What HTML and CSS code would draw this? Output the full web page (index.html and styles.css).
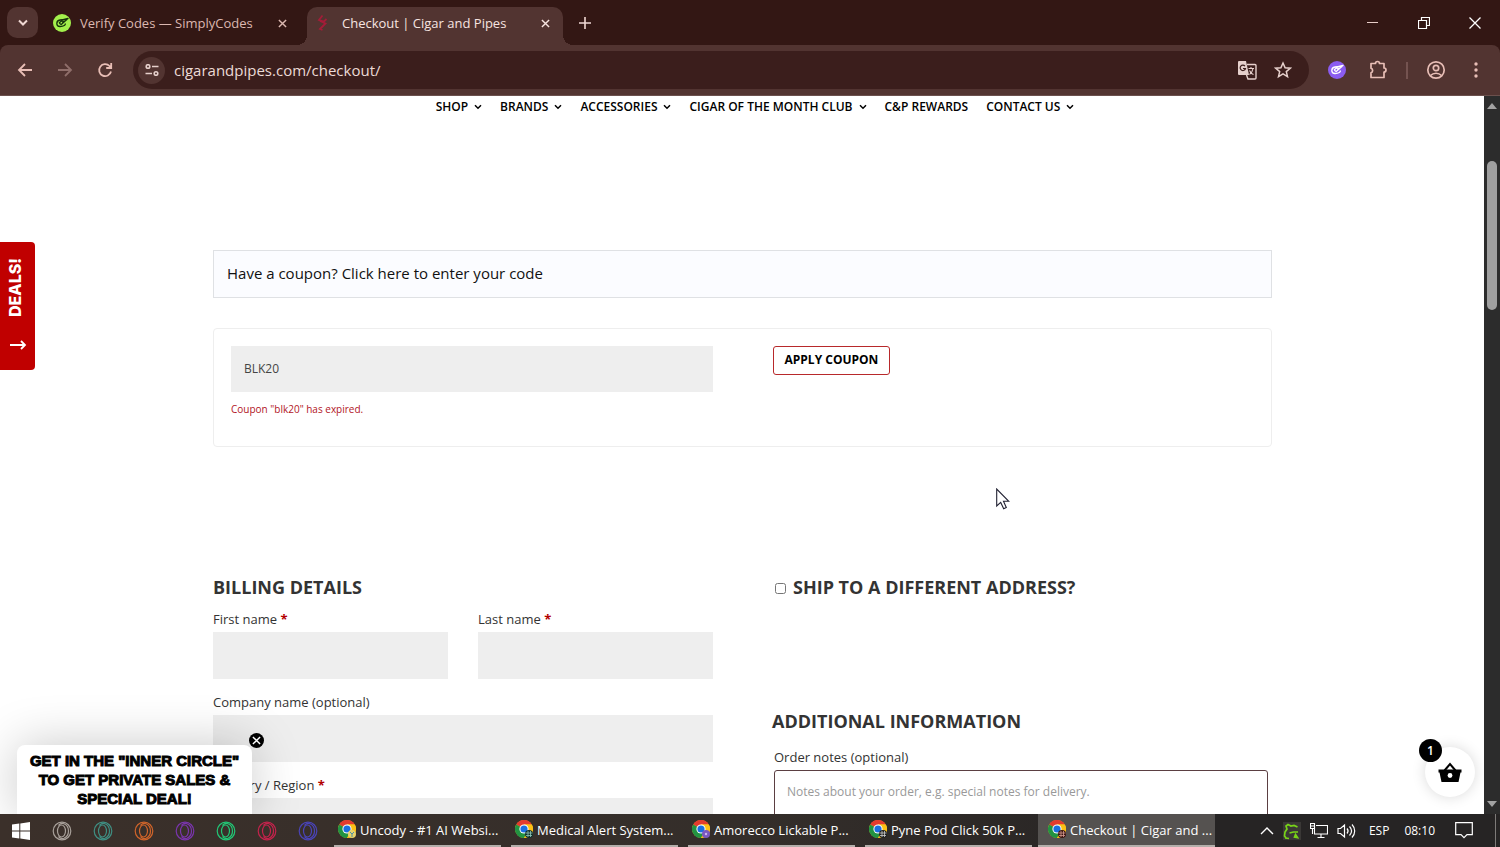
FILE: index.html
```html
<!DOCTYPE html>
<html lang="en">
<head>
    <meta charset="UTF-8">
    <title>Checkout | Cigar and Pipes</title>
    <link rel="stylesheet" href="styles.css">
</head>
<body>
    <!-- shared icons -->
    <svg class="sprite" width="0" height="0">
        <symbol id="caret" viewBox="0 0 8 6"><path d="M1 1.2l3 3 3-3" fill="none" stroke="currentColor" stroke-width="1.5"/></symbol>
        <symbol id="cross" viewBox="0 0 10 10"><path d="M1 1l8 8M9 1l-8 8" fill="none" stroke="currentColor" stroke-width="1.6"/></symbol>
        <symbol id="opera" viewBox="0 0 20 20">
            <g fill="none" stroke="currentColor" stroke-width="1.2">
                <circle cx="10" cy="10" r="8.8"/>
                <ellipse cx="9.5" cy="10" rx="4" ry="6"/>
                <path d="M6.500 4.500C8 2.700 10 2 12 2.800c6 2.600 6 11.800 0 14.400-2 .8-4 .1-5.500-1.700"/>
            </g>
        </symbol>
        <symbol id="chrome" viewBox="0 0 20 20">
            <circle cx="9" cy="9" r="9" fill="#fbc116"/>
            <path d="M9 9L1.200 4.500A9 9 0 0 1 16.800 4.500L9 4.500z" fill="#e33b2e"/>
            <path d="M9 9L1.200 4.500A9 9 0 0 0 9 18l4-6.800z" fill="#229342"/>
            <path d="M9 4.500h7.800A9 9 0 0 1 9 18l4-6.700z" fill="#fbc116"/>
            <circle cx="9" cy="9" r="4.600" fill="#fff"/>
            <circle cx="9" cy="9" r="3.600" fill="#1a6fe0"/>
        </symbol>
        <symbol id="codes" viewBox="0 0 18 18">
            <path d="M11.500 5.500L7 6C5 6.300 3.800 7.500 3.800 9.500c0 1.700 1.200 3 3.200 3l2.500-.3c1.700-.3 2.800-1.300 3-2.700M6 9l2.200 1.500L15 4.500l-5 1.200L6 9M9 8l2.500-1" fill="none" stroke="currentColor" stroke-width="1.3" stroke-linejoin="round"/>
        </symbol>
    </svg>

    <header class="titlebar">
        <button class="tab-search" aria-label="Search tabs">
            <svg width="10" height="8" viewBox="0 0 10 8"><path d="M1 1.500l4 4 4-4" fill="none" stroke="currentColor" stroke-width="2"/></svg>
        </button>
        <div class="tab">
            <svg class="favicon green" width="18" height="18"><use href="#codes"/></svg>
            <span class="tab-title">Verify Codes — SimplyCodes</span>
            <button class="tab-close" aria-label="Close tab"><svg width="9" height="9"><use href="#cross"/></svg></button>
        </div>
        <div class="tab active">
            <svg width="18" height="18" viewBox="0 0 18 18"><path d="M7.500 1.500L4 6l5 1.500 2.500-2.500M5 7l5.500 2.500L5 15l2.500 1" fill="none" stroke="#a31c38" stroke-width="1.8"/></svg>
            <span class="tab-title">Checkout | Cigar and Pipes</span>
            <button class="tab-close" aria-label="Close tab"><svg width="9" height="9"><use href="#cross"/></svg></button>
        </div>
        <button class="new-tab" aria-label="New tab">
            <svg width="12" height="12" viewBox="0 0 12 12"><path d="M6 0v12M0 6h12" stroke="currentColor" stroke-width="1.6"/></svg>
        </button>
        <div class="window-buttons">
            <button aria-label="Minimize"><svg width="12" height="12" viewBox="0 0 12 12"><path d="M0 5.500h11" stroke="#e8cdc8"/></svg></button>
            <button aria-label="Restore"><svg width="12" height="12" viewBox="0 0 12 12"><path d="M.500 3.500h8v8h-8zM3.500 3V.500h8v8H9" fill="none" stroke="currentColor" stroke-width="1.200"/></svg></button>
            <button aria-label="Close"><svg width="12" height="12" viewBox="0 0 12 12"><path d="M.500.500l11 11M11.500.500l-11 11" stroke="currentColor" stroke-width="1.300"/></svg></button>
        </div>
    </header>

    <div class="toolbar">
        <div class="history">
            <button aria-label="Back"><svg width="16" height="16" viewBox="0 0 16 16"><path d="M15 8H2M8 2L2 8l6 6" fill="none" stroke="currentColor" stroke-width="1.800"/></svg></button>
            <button class="dim" aria-label="Forward"><svg width="16" height="16" viewBox="0 0 16 16"><path d="M1 8h13M8 2l6 6-6 6" fill="none" stroke="currentColor" stroke-width="1.800"/></svg></button>
            <button aria-label="Reload"><svg width="16" height="16" viewBox="0 0 16 16"><path d="M14 9.500A6 6 0 1 1 12.500 4L14 5.500M14.200 1v5H9.200" fill="none" stroke="currentColor" stroke-width="1.800"/></svg></button>
        </div>
        <div class="omnibox">
            <button class="site-info" aria-label="Site information">
                <svg width="14" height="12" viewBox="0 0 14 12"><g fill="none" stroke="currentColor" stroke-width="1.600"><circle cx="3" cy="2.500" r="1.800"/><path d="M7 2.500h6.500M.500 9.500H7"/><circle cx="11" cy="9.500" r="1.800"/></g></svg>
            </button>
            <input class="url" type="text" value="cigarandpipes.com/checkout/" aria-label="Address">
            <button aria-label="Translate">
                <svg width="20" height="20" viewBox="0 0 20 20"><path d="M2 1h7l3 14H2a1 1 0 0 1-1-1V2a1 1 0 0 1 1-1z" fill="currentColor"/><path d="M10 4.500h8a1 1 0 0 1 1 1V18a1 1 0 0 1-1 1h-7l-1.500-4" fill="none" stroke="currentColor" stroke-width="1.400"/><path d="M8 6.200A2.700 2.700 0 1 0 8.500 8.500H6" fill="none" stroke="#3b1e1c" stroke-width="1.200"/><path d="M11.500 8.500H17M14 7v1.500M16 8.500c-.5 3-2 5-3.500 6M12.500 10.500c1 2 2.500 3.500 4 4" fill="none" stroke="currentColor" stroke-width="1.100"/></svg>
            </button>
            <button aria-label="Bookmark">
                <svg width="18" height="18" viewBox="0 0 18 18"><path d="M9 2l2.100 4.700 5.100.5-3.900 3.400 1.200 5L9 12.900l-4.500 2.700 1.200-5L1.800 7.200l5.100-.5z" fill="none" stroke="currentColor" stroke-width="1.500"/></svg>
            </button>
        </div>
        <div class="extensions">
            <button aria-label="SimplyCodes"><svg class="favicon purple" width="18" height="18"><use href="#codes"/></svg></button>
            <button aria-label="Extensions">
                <svg width="20" height="20" viewBox="0 0 20 20"><path d="M3 3.500h4.500a2 2 0 0 1 4 0H16V8a2 2 0 0 1 0 4v5.500H3v-4.800a2.300 2.300 0 0 0 0-4.400z" fill="none" stroke="currentColor" stroke-width="1.700" stroke-linejoin="round"/></svg>
            </button>
            <span class="divider"></span>
            <button aria-label="Profile">
                <svg width="20" height="20" viewBox="0 0 20 20"><g fill="none" stroke="currentColor" stroke-width="1.700"><circle cx="10" cy="10" r="8.200"/><circle cx="10" cy="8" r="2.700"/><path d="M4.500 15.500c3-3 8-3 11 0"/></g></svg>
            </button>
            <button aria-label="Menu">
                <svg width="4" height="16" viewBox="0 0 4 16"><g fill="currentColor"><circle cx="2" cy="2" r="1.700"/><circle cx="2" cy="8" r="1.700"/><circle cx="2" cy="14" r="1.700"/></g></svg>
            </button>
        </div>
    </div>

    <div class="window">
        <main class="page">
            <nav class="menu">
                <a href="#">SHOP <svg width="8" height="6"><use href="#caret"/></svg></a>
                <a href="#">BRANDS <svg width="8" height="6"><use href="#caret"/></svg></a>
                <a href="#">ACCESSORIES <svg width="8" height="6"><use href="#caret"/></svg></a>
                <a href="#">CIGAR OF THE MONTH CLUB <svg width="8" height="6"><use href="#caret"/></svg></a>
                <a href="#">C&amp;P REWARDS</a>
                <a href="#">CONTACT US <svg width="8" height="6"><use href="#caret"/></svg></a>
            </nav>

            <div class="content">
                <div class="notice">Have a coupon? <a href="#coupon">Click here to enter your code</a></div>

                <form class="coupon">
                    <div>
                        <input class="field" type="text" id="coupon" value="BLK20" aria-label="Coupon code">
                        <p class="error">Coupon "blk20" has expired.</p>
                    </div>
                    <div>
                        <button class="apply" type="button">APPLY COUPON</button>
                    </div>
                </form>

                <form class="checkout">
                    <div class="billing">
                        <h3>BILLING DETAILS</h3>
                        <div class="names">
                            <div class="row">
                                <label for="first">First name <b class="required">*</b></label>
                                <input class="field" type="text" id="first">
                            </div>
                            <div class="row">
                                <label for="last">Last name <b class="required">*</b></label>
                                <input class="field" type="text" id="last">
                            </div>
                        </div>
                        <div class="row">
                            <label for="company">Company name (optional)</label>
                            <input class="field" type="text" id="company">
                        </div>
                        <div class="row">
                            <label for="country">Country / Region <b class="required">*</b></label>
                            <select class="field" id="country"><option></option></select>
                        </div>
                    </div>
                    <div class="shipping">
                        <h3 class="ship"><input type="checkbox" id="ship"><label for="ship">SHIP TO A DIFFERENT ADDRESS?</label></h3>
                        <h3>ADDITIONAL INFORMATION</h3>
                        <div class="row notes">
                            <label for="notes">Order notes (optional)</label>
                            <textarea id="notes" placeholder="Notes about your order, e.g. special notes for delivery."></textarea>
                        </div>
                    </div>
                </form>
            </div>

            <button class="deals">
                <svg width="18" height="18" viewBox="0 0 18 18"><path d="M1 9h15M12 5l4 4-4 4" fill="none" stroke="currentColor" stroke-width="1.800"/></svg>
                <span>DEALS!</span>
            </button>

            <div class="promo">GET IN THE "INNER CIRCLE" TO GET PRIVATE SALES &amp; SPECIAL DEAL!</div>
            <button class="promo-close" aria-label="Close"><svg width="9" height="9"><use href="#cross"/></svg></button>

            <button class="cart" aria-label="Cart">
                <svg width="24" height="21" viewBox="0 0 24 21"><path d="M6.500 8.500L12 2l5.500 6.500" fill="none" stroke="#000" stroke-width="2"/><path d="M.500 7.500h23v3h-1L20.500 20h-17L1.500 10.500h-1z"/><circle cx="12" cy="13.500" r="2.400" fill="#fff"/></svg>
                <span class="count">1</span>
            </button>

            <svg class="pointer" width="14" height="22" viewBox="0 0 14 22"><path d="M.700 1v17l4-3.600 3 6.300 2.600-1.200-2.800-6.200h5.300z" fill="#fff" stroke="#223" stroke-width="1.100"/></svg>
        </main>
        <div class="scrollbar">
            <svg width="10" height="6" viewBox="0 0 10 6"><path d="M0 6l5-6 5 6z" fill="#a2a2a2"/></svg>
            <span class="thumb"></span>
            <svg width="10" height="6" viewBox="0 0 10 6"><path d="M0 0l5 6 5-6z" fill="#a2a2a2"/></svg>
        </div>
    </div>

    <footer class="taskbar">
        <button class="launch" aria-label="Start"><svg width="18" height="18" viewBox="0 0 18 18"><path d="M0 2.500L7.300 1.500v7H0zM8.300 1.400L18 0v8.500H8.300zM0 9.500h7.300v7L0 15.500zM8.300 9.500H18V18l-9.700-1.400z" fill="#fff"/></svg></button>
        <button class="launch gray" aria-label="Opera 1"><svg width="20" height="20"><use href="#opera"/></svg></button>
        <button class="launch teal" aria-label="Opera 2"><svg width="20" height="20"><use href="#opera"/></svg></button>
        <button class="launch orange" aria-label="Opera 3"><svg width="20" height="20"><use href="#opera"/></svg></button>
        <button class="launch violet" aria-label="Opera 4"><svg width="20" height="20"><use href="#opera"/></svg></button>
        <button class="launch lime" aria-label="Opera 5"><svg width="20" height="20"><use href="#opera"/></svg></button>
        <button class="launch red" aria-label="Opera 6"><svg width="20" height="20"><use href="#opera"/></svg></button>
        <button class="launch blue" aria-label="Opera 7"><svg width="20" height="20"><use href="#opera"/></svg></button>
        <div class="tasks">
            <button class="task"><svg width="20" height="20"><use href="#chrome"/><circle cx="14" cy="14" r="4" fill="#e9d36a"/><path d="M12 12l2 2 2-2M14 14v3" stroke="#4a8fa8" fill="none"/></svg>Uncody - #1 AI Websi...</button>
            <button class="task"><svg width="20" height="20"><use href="#chrome"/><circle cx="14" cy="14" r="4" fill="#12302c"/><path d="M10.500 13h7M11 15.500h6M13 11v6M15.500 11v6" stroke="#8fc7b8" stroke-width=".8"/></svg>Medical Alert System...</button>
            <button class="task"><svg width="20" height="20"><use href="#chrome"/><circle cx="14" cy="14" r="4" fill="#7a58c0"/><circle cx="14" cy="14" r="1.200" fill="#c9b4f0"/></svg>Amorecco Lickable P...</button>
            <button class="task"><svg width="20" height="20"><use href="#chrome"/><circle cx="14" cy="14" r="4" fill="#222"/><path d="M10.500 13h7M11 15.500h6M13 11v6M15.500 11v6" stroke="#ccc" stroke-width=".8"/></svg>Pyne Pod Click 50k P...</button>
            <button class="task current"><svg width="20" height="20"><use href="#chrome"/><circle cx="14" cy="14" r="4" fill="#3a1512"/><path d="M10.500 13h7M11 15.500h6M13 11v6M15.500 11v6" stroke="#d69a90" stroke-width=".8"/></svg>Checkout | Cigar and ...</button>
        </div>
        <div class="tray">
            <svg width="14" height="8" viewBox="0 0 14 8"><path d="M1 7l6-6 6 6" fill="none" stroke="#fff" stroke-width="1.400"/></svg>
            <svg width="18" height="18" viewBox="0 0 18 18"><path fill="#3a3836" d="M0 0h18v18H0z"/><path d="M3.500 16.500L1.500 14l.5-4 2-3-1-3 2-1.500 3 1.500 3-.5 3.500 1.500M2 16l4 .5M6.500 11l4-1h4.500M12.500 12.500l2 3-3-.5z" fill="none" stroke="#78d418" stroke-width="1.700"/></svg>
            <svg width="18" height="16" viewBox="0 0 18 16"><path d="M6 2.500h11.500v8.500H4.500V6M11 11v3.500M7.500 14.500h7M.500.500h4v5h-4zM1 3h3M2.500 5.500V11" fill="none" stroke="#fff" stroke-width="1.100"/></svg>
            <svg width="19" height="16" viewBox="0 0 19 16"><path d="M1 5.500h2.500L7.500 2v12L3.500 10.500H1zM10 5.500c1.300 1.500 1.300 3.500 0 5M12.500 3.500c2.500 2.700 2.500 6.300 0 9M15 1.500c3.600 3.800 3.600 9.200 0 13" fill="none" stroke="#fff" stroke-width="1.200"/></svg>
            <span class="lang">ESP</span>
            <span class="clock">08:10</span>
            <svg width="18" height="17" viewBox="0 0 18 17"><path d="M.700.700h16.600v12H12l-3 3-3-3H.700z" fill="none" stroke="#fff" stroke-width="1.200"/></svg>
            <span class="peek"></span>
        </div>
    </footer>
</body>
</html>
```

FILE: styles.css
```css
* {
    box-sizing: border-box;
}
body {
    margin: 0;
    height: 100vh;
    display: flex;
    flex-direction: column;
    overflow: hidden;
    background-color: #331714;
    color: #333;
    font-family: "Open Sans", "Noto Sans", sans-serif;
    font-size: 13px;
}
button {
    display: flex;
    align-items: center;
    justify-content: center;
    padding: 0;
    border: none;
    background: none;
    color: inherit;
    font-family: inherit;
    cursor: pointer;
}
svg {
    display: block;
    flex-shrink: 0;
}
a {
    color: inherit;
    text-decoration: none;
}
.sprite {
    position: absolute;
}

/* browser tabs */
.titlebar {
    height: 45px;
    flex-shrink: 0;
    display: flex;
    align-items: center;
    padding-left: 7px;
    color: #f0d8d3;
}
.tab-search {
    width: 31px;
    height: 31px;
    border-radius: 10px;
    background-color: #523431;
    margin-right: 13px;
}
.tab {
    align-self: flex-end;
    position: relative;
    width: 256px;
    height: 38px;
    display: flex;
    align-items: center;
    gap: 9px;
    padding: 0 20px 6px 2px;
    font-size: 13px;
    color: #dcb8b1;
}
.tab.active {
    background-color: #523431;
    border-radius: 10px 10px 0 0;
    color: #f7e4e0;
    padding-left: 8px;
    padding-right: 13px;
}
.tab.active::before, .tab.active::after {
    content: "";
    position: absolute;
    bottom: 0;
    width: 10px;
    height: 10px;
}
.tab.active::before {
    left: -10px;
    background: radial-gradient(circle at 0 0, transparent 10px, #523431 10px);
}
.tab.active::after {
    right: -10px;
    background: radial-gradient(circle at 100% 0, transparent 10px, #523431 10px);
}
.tab-title {
    flex: 1;
    white-space: nowrap;
}
.favicon {
    border-radius: 50%;
}
.green {
    background-color: #a3f04c;
    color: #16330c;
}
.purple {
    background-color: #8b5cf0;
    color: #fff;
}
.new-tab {
    width: 30px;
    height: 30px;
    margin-left: 7px;
}
.window-buttons {
    display: flex;
    margin-left: auto;
    color: #fff;
}
.window-buttons button {
    width: 51px;
    height: 44px;
}

/* address bar */
.toolbar {
    height: 51px;
    flex-shrink: 0;
    display: flex;
    align-items: center;
    padding-left: 5px;
    background-color: #523431;
    border-radius: 8px 8px 0 0;
    border-bottom: 1px solid #6b504d;
    color: #e8beb6;
}
.history {
    display: flex;
}
.history button {
    width: 40px;
    height: 38px;
}
.history .dim {
    color: #8f6e6a;
}
.omnibox {
    flex: 1;
    height: 38px;
    display: flex;
    align-items: center;
    gap: 17px;
    margin-left: 8px;
    padding: 0 17px 0 5px;
    border-radius: 19px;
    background-color: #3b1e1c;
    color: #e6d0cc;
}
.site-info {
    width: 27px;
    height: 27px;
    border-radius: 50%;
    background-color: #523431;
}
.url {
    flex: 1;
    margin-left: -8px;
    padding: 0;
    border: none;
    outline: none;
    background: none;
    color: #ecdad6;
    font-family: inherit;
    font-size: 15px;
}
.extensions {
    display: flex;
    align-items: center;
    padding: 0 22px 0 19px;
}
.extensions button:nth-child(2) {
    margin: 0 18px 0 22px;
}
.divider {
    width: 2px;
    height: 17px;
    background-color: #745350;
    margin-right: 18px;
}
.extensions button:last-child {
    margin-left: 28px;
}

/* web page */
.window {
    flex: 1;
    min-height: 0;
    display: flex;
}
.page {
    position: relative;
    flex: 1;
    overflow: hidden;
    background-color: #fff;
}
.menu {
    display: flex;
    justify-content: center;
    gap: 18px;
    padding: 3px 0 0 26px;
    color: #000;
    font-size: 12px;
    font-weight: 600;
    line-height: 16px;
}
.menu a {
    display: flex;
    align-items: center;
    gap: 6px;
}
.content {
    padding: 135px 212px 0 213px;
}
.notice {
    padding: 0 13px 2px;
    border: 1px solid #dfe1e4;
    background-color: #fbfcff;
    color: #111;
    font-size: 15px;
    line-height: 44px;
}
.coupon {
    display: grid;
    grid-template-columns: 1fr 1fr;
    gap: 60px;
    margin-top: 30px;
    padding: 17px;
    border: 1px solid #eee;
    border-radius: 4px;
}
.field {
    display: block;
    width: 100%;
    height: 47px;
    padding: 0 13px;
    border: none;
    border-radius: 0;
    background-color: #eee;
    color: #444;
    font-family: inherit;
    font-size: 12px;
    appearance: none;
}
.coupon .field {
    height: 46px;
    padding-bottom: 2px;
}
.error {
    margin: 10px 0 13px;
    color: #b2141e;
    font-size: 10px;
    line-height: 14px;
}
.apply {
    height: 29px;
    padding: 0 11px 2px;
    border: 1px solid #b8292b;
    border-radius: 3px;
    color: #000;
    font-size: 12px;
    font-weight: 700;
}
.checkout {
    display: grid;
    grid-template-columns: 1fr 1fr;
    gap: 59px;
    margin-top: 130px;
}
h3 {
    margin: 0 0 9px;
    font-size: 18px;
    font-weight: 700;
    line-height: 20px;
}
.names {
    display: grid;
    grid-template-columns: 1fr 1fr;
    gap: 30px;
}
.row {
    margin-bottom: 10px;
}
.row label {
    display: block;
    font-size: 13px;
    line-height: 26px;
}
.required {
    color: #b20000;
}
.ship {
    display: flex;
    align-items: center;
    gap: 7px;
    margin-bottom: 114px;
}
.ship input {
    width: 11px;
    height: 11px;
    margin: 2px 0 0 3px;
}
.notes {
    padding: 4px 4px 0 2px;
}
.notes textarea {
    display: block;
    width: 100%;
    height: 90px;
    padding: 12px;
    border: 1px solid #5b3f42;
    border-radius: 3px;
    font-family: inherit;
    font-size: 12px;
    resize: none;
}
.notes textarea::placeholder {
    color: #999;
}

/* things floating over the page */
.deals {
    position: absolute;
    left: 0;
    top: 146px;
    flex-direction: column-reverse;
    gap: 19px;
    width: 35px;
    height: 128px;
    border-radius: 0 4px 4px 0;
    background-color: #c00000;
    color: #fff;
    font-family: Inter, sans-serif;
    font-size: 16px;
    font-weight: 800;
}
.deals span {
    writing-mode: vertical-rl;
    transform: rotate(180deg);
    margin-right: 6px;
}
.promo {
    position: absolute;
    left: 17px;
    bottom: 0;
    width: 235px;
    padding: 6px 8px 6px;
    border-radius: 8px 8px 0 0;
    background-color: #fff;
    box-shadow: 0 0 50px rgba(0, 0, 0, 0.22);
    color: #000;
    font-family: "Liberation Sans", Arial, sans-serif;
    font-size: 15px;
    font-weight: 700;
    line-height: 19px;
    text-align: center;
    -webkit-text-stroke: 1px #000;
}
.promo-close {
    position: absolute;
    left: 249px;
    bottom: 66px;
    width: 15px;
    height: 15px;
    border-radius: 50%;
    background-color: #000;
    color: #fff;
}
.cart {
    position: absolute;
    right: 9px;
    bottom: 17px;
    width: 50px;
    height: 50px;
    border-radius: 50%;
    background-color: #fff;
    box-shadow: 0 0 14px rgba(0, 0, 0, 0.15);
}
.count {
    position: absolute;
    left: -6px;
    top: -8px;
    width: 23px;
    border-radius: 50%;
    background-color: #000;
    color: #fff;
    font-size: 12px;
    font-weight: 600;
    line-height: 23px;
}
.pointer {
    position: absolute;
    left: 996px;
    top: 392px;
}
.scrollbar {
    width: 16px;
    display: flex;
    flex-direction: column;
    align-items: center;
    padding: 7px 0;
    background-color: #2c2c2c;
}
.thumb {
    width: 10px;
    height: 149px;
    margin: 52px 0 auto;
    border-radius: 5px;
    background-color: #9f9f9f;
}

/* taskbar */
.taskbar {
    height: 33px;
    flex-shrink: 0;
    display: flex;
    align-items: stretch;
    background: linear-gradient(to right, #3b302a, #342e2a 50%, #262424 80%);
    color: #fff;
}
.launch {
    width: 41px;
}
.gray { color: #a8a09a; }
.teal { color: #3f8f83; }
.orange { color: #d0642a; }
.violet { color: #7a35ad; }
.lime { color: #22c776; }
.red { color: #c4234c; }
.blue { color: #4a44b8; }
.tasks {
    flex: 1;
    display: flex;
    gap: 10px;
    margin-left: 6px;
}
.task {
    width: 167px;
    justify-content: flex-start;
    gap: 2px;
    padding-left: 4px;
    border-bottom: 2px solid #b3aeaa;
    font-size: 13px;
    white-space: nowrap;
}
.task.current {
    width: 177px;
    margin-left: -4px;
    padding-left: 10px;
    background-color: #555250;
}
.tray {
    display: flex;
    align-items: center;
    gap: 9px;
    padding-right: 4px;
    font-size: 12px;
}
.lang {
    margin-left: 4px;
}
.clock {
    margin: 0 11px 0 6px;
}
.peek {
    width: 1px;
    height: 33px;
    margin-left: 13px;
    background-color: #7d7a78;
}
```
